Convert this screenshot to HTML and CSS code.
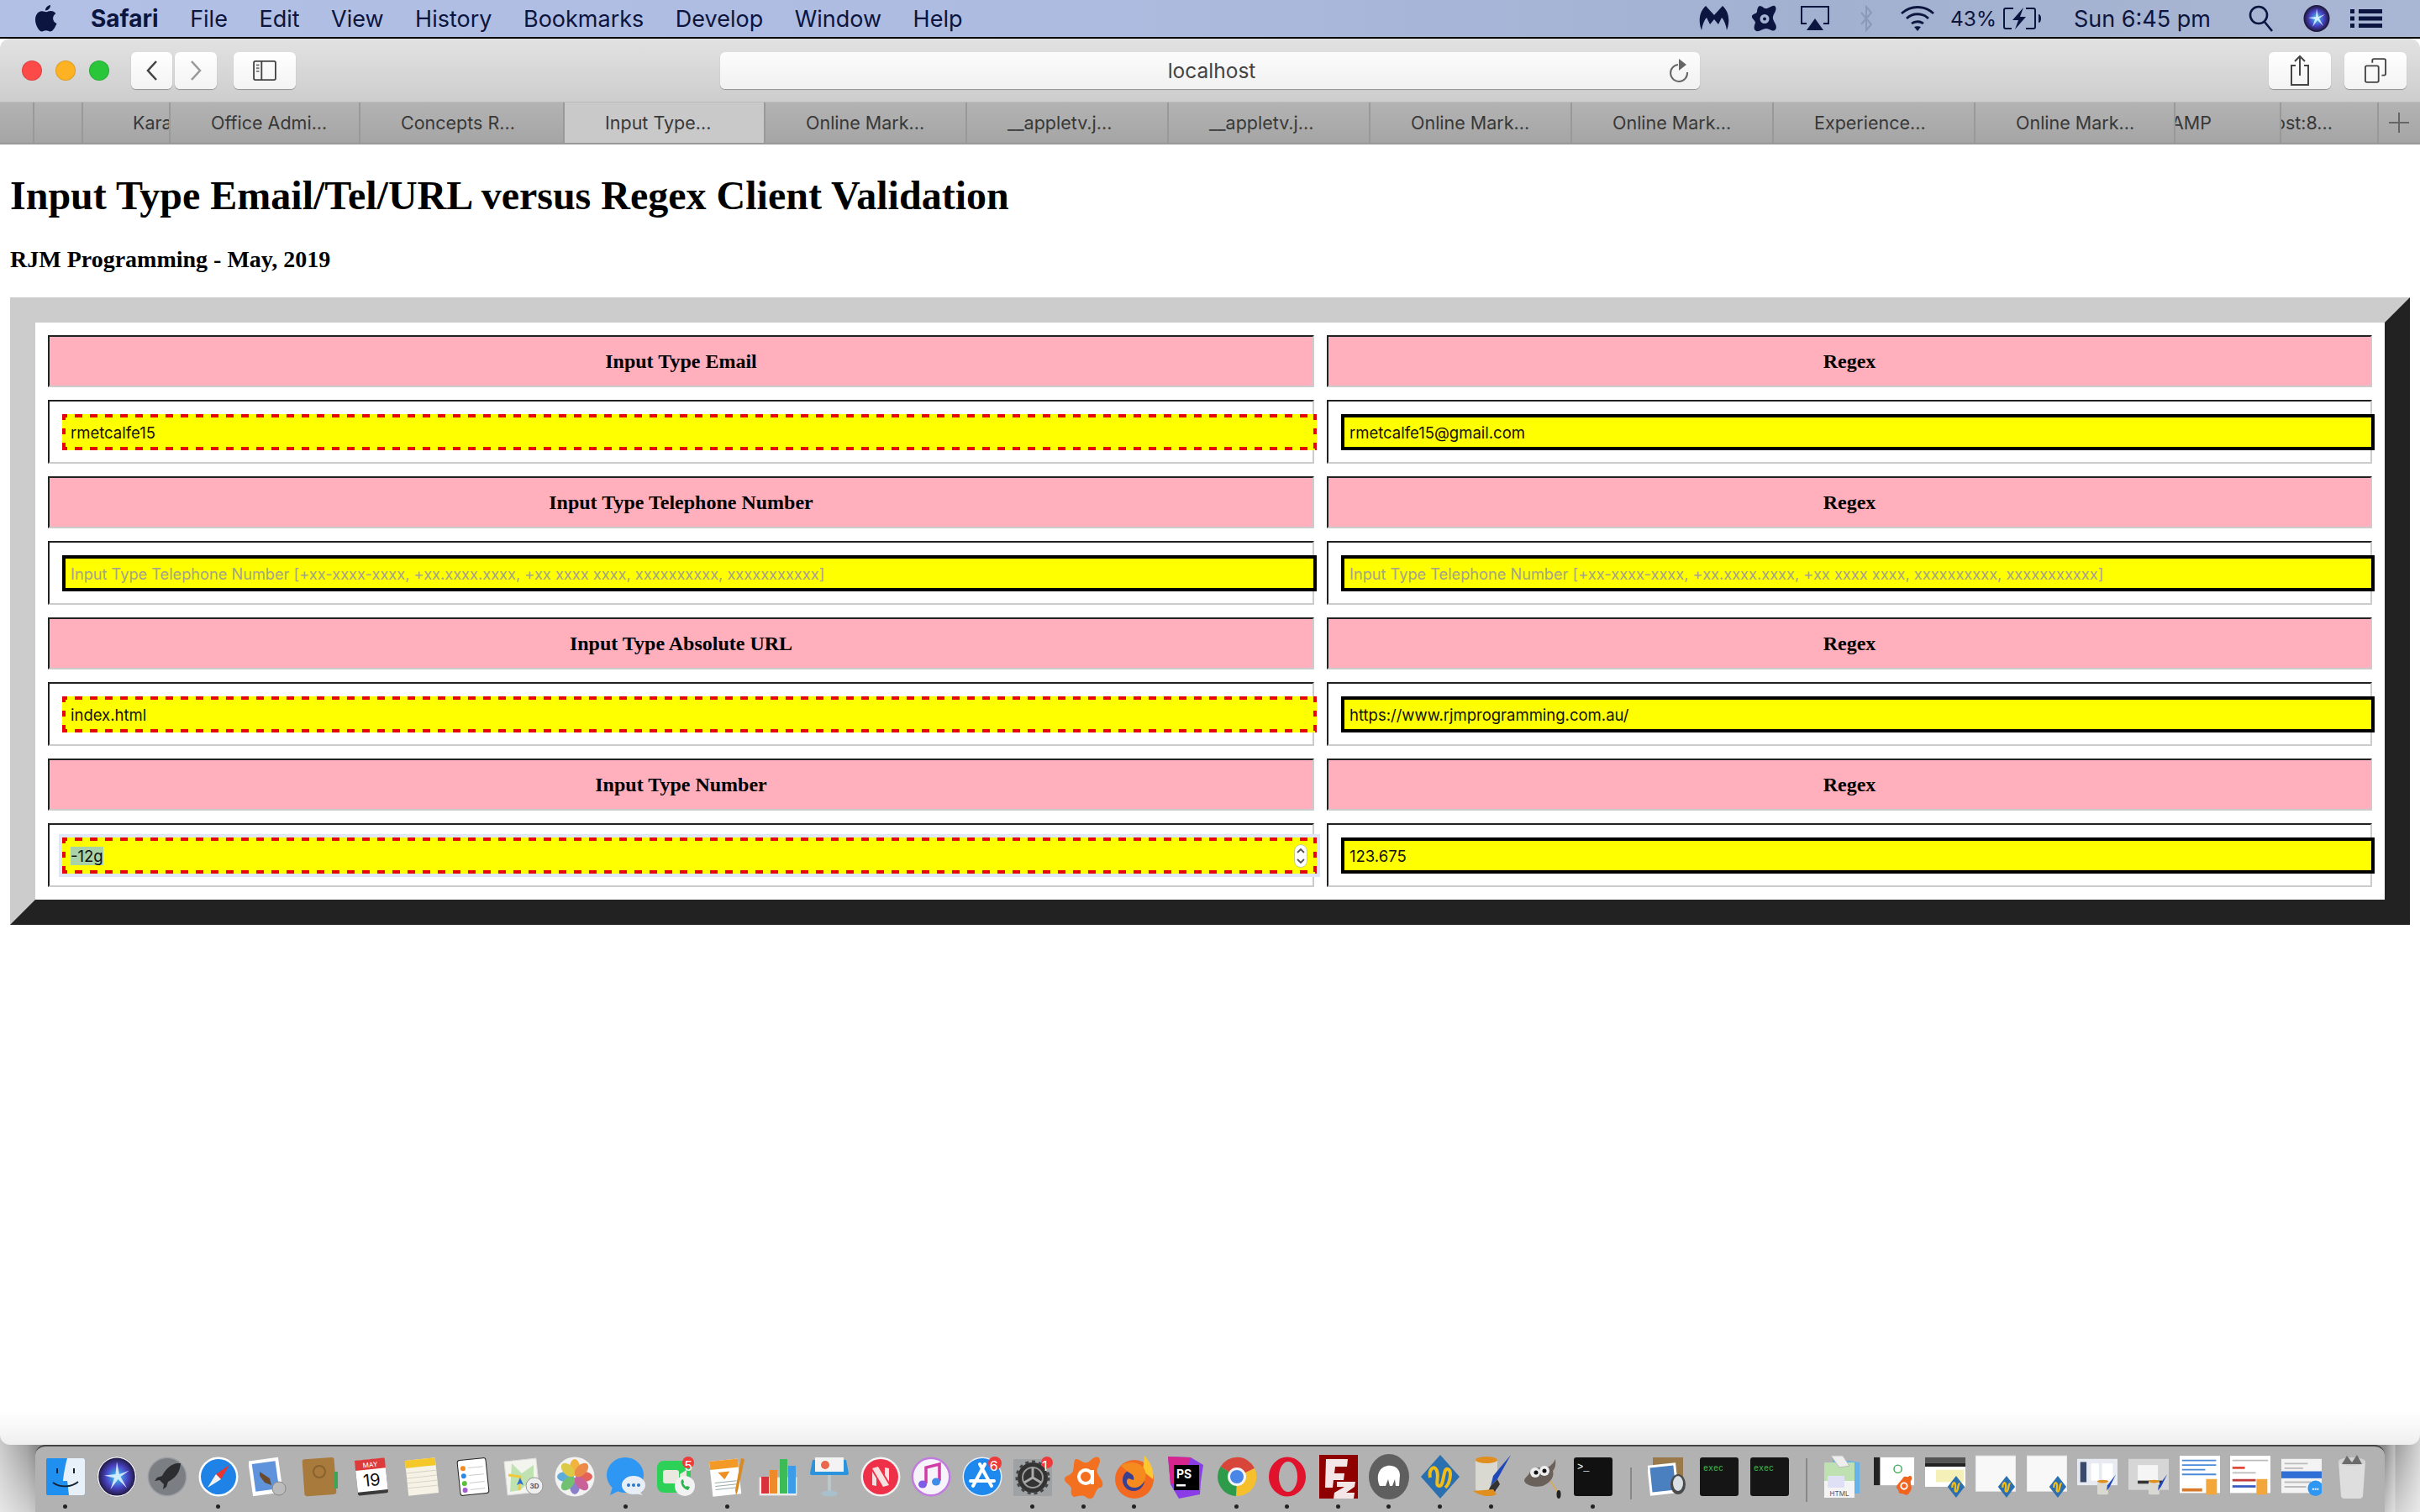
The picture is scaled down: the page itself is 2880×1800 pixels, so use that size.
FILE: index.html
```html
<!DOCTYPE html>
<html lang="en">
<head>
  <meta charset="UTF-8" />
  <title>Input Type Email/Tel/URL versus Regex Client Validation</title>
  <link rel="stylesheet" href="styles.css">
</head>
<body>
  <div class="menubar">
    <div class="menu-left">
      <svg class="apple" viewBox="0 0 26 32"><path d="M18 0c.3 3-2.400 6.500-6 6.500C11.700 3.300 14.800.4 18 0zM13 8.300c1.500 0 3-1.200 5.500-1.200 2.300 0 4.500 1.200 5.800 3.100-4.800 2.800-4 9.700 1.200 11.700-1.500 3.800-4.500 9.600-7.800 9.600-1.900 0-2.800-1.200-4.900-1.200-2.200 0-3.200 1.200-5 1.200C4.300 31.500 0 23.800 0 17.500 0 11.200 3.900 7.300 7.800 7.300c2.300 0 3.900 1 5.200 1z"/></svg>
      <b>Safari</b><span>File</span><span>Edit</span><span>View</span><span>History</span><span>Bookmarks</span><span>Develop</span><span>Window</span><span>Help</span>
    </div>
    <div class="menu-right">
      <svg class="st-malware" viewBox="0 0 36 32"><path d="M3 30C-1 20 0 8 8 1l10 11L28 1c8 7 9 19 5 29-1-6-3-12-6-15l-4 8-5-6-5 6-4-8c-3 3-5 9-6 15z"/></svg>
      <svg class="st-avast" viewBox="0 0 32 32"><path d="M10 1c4 0 5 4 9 3 4-1 6-4 9-3 3 2 1 7-1 10-2 4-1 6 1 10 2 3 3 7 0 9-3 2-6-2-10-2-4 0-8 4-12 3-4-2-2-7-1-10 0-3-5-5-4-8 1-3 5-2 6-5 0-3 1-6 3-7zM16 11a5 5 0 1 0 0 11 5 5 0 1 0 0-11z" fill-rule="evenodd"/><circle cx="16" cy="16.500" r="2"/></svg>
      <svg class="st-air" viewBox="0 0 36 32" fill="none" stroke="#0b1540" stroke-width="2"><path d="M8 22H2V2h32v20h-6"/><path d="M18 16l10 14H8z" fill="#0b1540" stroke="none"/></svg>
      <svg class="st-bt" viewBox="0 0 18 32" fill="none" stroke="#8c99b6" stroke-width="2"><path d="M3 9l12 14-6 7V2l6 7L3 23"/></svg>
      <svg class="st-wifi" viewBox="0 0 42 32" fill="none" stroke="#0b1540" stroke-width="2.800"><path d="M2 10c11-10 27-10 38 0M8 16c7-7 19-7 26 0M14 22c4-3 10-3 14 0"/><path d="M21 31l-4-5c2-1 6-1 8 0z" fill="#0b1540" stroke="none"/></svg>
      <span class="st-pct">43%</span>
      <svg class="st-batt" viewBox="0 0 46 26" fill="none" stroke="#0b1540" stroke-width="2"><path d="M12 1H3a2 2 0 0 0-2 2v20a2 2 0 0 0 2 2h7M27 1h9a2 2 0 0 1 2 2v20a2 2 0 0 1-2 2h-9"/><path d="M42 8c2 0 3 2 3 5s-1 5-3 5z" fill="#0b1540" stroke="none"/><path d="M24 0L11 15h7l-4 11 13-15h-7z" fill="#0b1540" stroke="none"/></svg>
      <span class="st-time">Sun 6:45 pm</span>
      <svg class="st-search" viewBox="0 0 30 32" fill="none" stroke="#0b1540" stroke-width="2.600"><circle cx="12" cy="12" r="10"/><path d="M19 20l9 11"/></svg>
      <svg class="st-siri" viewBox="0 0 32 32"><use href="#siri-ball"/></svg>
      <svg class="st-list" viewBox="0 0 38 22" fill="#0b1540"><rect width="5" height="5"/><rect x="10" width="28" height="5"/><rect y="8.500" width="5" height="5"/><rect x="10" y="8.500" width="28" height="5"/><rect y="17" width="5" height="5"/><rect x="10" y="17" width="28" height="5"/></svg>
    </div>
  </div>

  <div class="window">
    <div class="toolbar">
      <div class="lights"><i class="red"></i><i class="amber"></i><i class="green"></i></div>
      <div class="nav">
        <div class="btn back"><svg viewBox="0 0 16 26" width="16" height="26" fill="none" stroke="#444" stroke-width="2.600"><path d="M13 2L3 13l10 11"/></svg></div>
        <div class="btn fwd"><svg viewBox="0 0 16 26" width="16" height="26" fill="none" stroke="#999" stroke-width="2.600"><path d="M3 2l10 11L3 24"/></svg></div>
      </div>
      <div class="btn side"><svg viewBox="0 0 30 26" width="30" height="24" fill="none" stroke="#444" stroke-width="2"><rect x="1" y="1" width="28" height="24" rx="2"/><path d="M11 1v24"/><path d="M4 6h4M4 10h4M4 14h4" stroke="#777"/></svg></div>
      <div class="address">
        <span>localhost</span>
        <svg class="reload" viewBox="0 0 24 30" width="24" height="30" fill="none" stroke="#666" stroke-width="2"><path d="M11 8a10 10 0 1 0 11 9"/><path d="M12 1l9 7-9 7z" fill="#666" stroke="none"/></svg>
      </div>
      <div class="btn tool"><svg viewBox="0 0 24 38" width="24" height="38" fill="none" stroke="#444" stroke-width="2"><path d="M7 13H2v23h20V13h-5M12 25V2M6 8l6-6 6 6"/></svg></div>
      <div class="btn tool"><svg viewBox="0 0 28 32" width="26" height="30" fill="none" stroke="#444" stroke-width="2"><rect x="1" y="10" width="17" height="21" rx="2"/><path d="M10 6V3a2 2 0 0 1 2-2h13a2 2 0 0 1 2 2v17a2 2 0 0 1-2 2h-3"/></svg></div>
    </div>

    <div class="tabs">
      <div class="tab"></div>
      <div class="tab"></div>
      <div class="tab kara">Kara</div>
      <div class="tab">Office Admi...</div>
      <div class="tab">Concepts R...</div>
      <div class="tab active">Input Type...</div>
      <div class="tab">Online Mark...</div>
      <div class="tab">__appletv.j...</div>
      <div class="tab">__appletv.j...</div>
      <div class="tab">Online Mark...</div>
      <div class="tab">Online Mark...</div>
      <div class="tab">Experience...</div>
      <div class="tab">Online Mark...</div>
      <div class="tab cut-amp">AMP</div>
      <div class="tab cut-port">ost:8...</div>
      <div class="tab plus"><svg viewBox="0 0 24 24" width="24" height="24" stroke="#666" stroke-width="2"><path d="M12 0v24M0 12h24"/></svg></div>
    </div>

    <div class="page">
      <h1>Input Type Email/Tel/URL versus Regex Client Validation</h1>
      <h4>RJM Programming - May, 2019</h4>

      <table class="compare">
        <colgroup><col class="col-a"><col class="col-b"></colgroup>
        <tr><th>Input Type Email</th><th>Regex</th></tr>
        <tr>
          <td><div class="field bad">rmetcalfe15</div></td>
          <td><div class="field">rmetcalfe15@gmail.com</div></td>
        </tr>
        <tr><th>Input Type Telephone Number</th><th>Regex</th></tr>
        <tr>
          <td><div class="field hint">Input Type Telephone Number [+xx-xxxx-xxxx, +xx.xxxx.xxxx, +xx xxxx xxxx, xxxxxxxxxx, xxxxxxxxxxx]</div></td>
          <td><div class="field hint">Input Type Telephone Number [+xx-xxxx-xxxx, +xx.xxxx.xxxx, +xx xxxx xxxx, xxxxxxxxxx, xxxxxxxxxxx]</div></td>
        </tr>
        <tr><th>Input Type Absolute URL</th><th>Regex</th></tr>
        <tr>
          <td><div class="field bad">index.html</div></td>
          <td><div class="field">https://www.rjmprogramming.com.au/</div></td>
        </tr>
        <tr><th>Input Type Number</th><th>Regex</th></tr>
        <tr>
          <td>
            <div class="field bad focused">
              <span class="selected">-12g</span>
              <svg class="spinner" viewBox="0 0 16 28"><rect x=".5" y=".5" width="15" height="27" rx="7.500" fill="#fff" stroke="#c9c98a"/><path d="M4 10l4-4 4 4M4 18l4 4 4-4" fill="none" stroke="#555" stroke-width="1.800"/></svg>
            </div>
          </td>
          <td><div class="field">123.675</div></td>
        </tr>
      </table>
    </div>
  </div>

  <div class="dock-area">
    <div class="dock">
      <div class="app on"><svg viewBox="0 0 48 48"><rect x="1" y="2" width="46" height="44" rx="2" fill="#1f8ff0"/><path d="M26 2h19a2 2 0 0 1 2 2v40a2 2 0 0 1-2 2H28c-1-7-1-12-2-17h-5c1-10 3-20 5-27z" fill="#e8f0f9"/><path d="M14 14v6M34 14v6" stroke="#123" stroke-width="2"/><path d="M9 31c8 6 22 6 30-1" fill="none" stroke="#123" stroke-width="1.800"/></svg></div>
      <div class="app"><svg viewBox="0 0 32 32"><use href="#siri-ball"/><ellipse cx="16" cy="16" rx="15" ry="15.500" fill="none" stroke="#eee"/></svg></div>
      <div class="app"><svg viewBox="0 0 48 48"><circle cx="24" cy="24" r="23.500" fill="#9b9fa4"/><circle cx="24" cy="24" r="22" fill="#7b7f84"/><path d="M36 8c-8 1-14 7-18 15l-6 2-3 4 6-1 5 5-1 6 4-3 2-6c8-4 14-10 15-22z" fill="#2b2d30"/></svg></div>
      <div class="app on"><svg viewBox="0 0 48 48"><circle cx="24" cy="24" r="23.500" fill="#fff"/><circle cx="24" cy="24" r="21" fill="#1e82e6"/><path d="M37 10L21 21l6 6z" fill="#e8342c"/><path d="M11 37l16-10-6-6z" fill="#f2f2f2"/></svg></div>
      <div class="app"><svg viewBox="0 0 48 48"><rect x="2" y="3" width="36" height="42" fill="#fff" transform="rotate(-8 20 24)"/><rect x="6" y="7" width="28" height="33" fill="#5f94dd" transform="rotate(-8 20 24)"/><path d="M13 18l12 8 2 8-8-3-6-8z" fill="#6b4a2c"/><circle cx="36" cy="38" r="8" fill="#bbb" stroke="#888"/></svg></div>
      <div class="app"><svg viewBox="0 0 48 48"><rect x="4" y="2" width="38" height="44" rx="3" fill="#a87a3c" transform="rotate(-4 24 24)"/><rect x="41" y="18" width="4" height="20" fill="#3aa655"/><circle cx="23" cy="18" r="7" fill="none" stroke="#8a6230" stroke-width="2"/></svg></div>
      <div class="app"><svg viewBox="0 0 48 48"><g transform="rotate(-6 24 24)"><rect x="6" y="3" width="36" height="42" rx="2" fill="#3a3a3a"/><rect x="6" y="3" width="36" height="38" fill="#fff"/><rect x="6" y="3" width="36" height="12" fill="#dd3b3b"/><text x="24" y="12.500" class="cal-month">MAY</text><text x="24" y="35" class="cal-day">19</text></g></svg></div>
      <div class="app"><svg viewBox="0 0 48 48"><g transform="rotate(-6 24 24)"><rect x="6" y="3" width="36" height="42" fill="#f6f3e6"/><rect x="6" y="3" width="36" height="9" fill="#f4c829"/><path d="M6 18h36M6 24h36M6 30h36M6 36h36" stroke="#d8d4c4"/></g></svg></div>
      <div class="app"><svg viewBox="0 0 48 48"><g transform="rotate(-6 24 24)"><rect x="7" y="3" width="34" height="42" rx="3" fill="#fff" stroke="#222"/><circle cx="13" cy="13" r="3" fill="#f08a24"/><circle cx="13" cy="22" r="3" fill="#2a8ae8"/><circle cx="13" cy="31" r="3" fill="#5ac03c"/><circle cx="13" cy="39" r="3" fill="#a65ad8"/><path d="M19 13h18M19 22h18M19 31h18M19 39h18" stroke="#ccc"/></g></svg></div>
      <div class="app"><svg viewBox="0 0 48 48"><rect x="3" y="4" width="38" height="40" fill="#f4f4ee" stroke="#ddd" transform="rotate(-6 22 24)"/><path d="M10 8l12 12 14-10v16L20 40 8 42z" fill="#bfe3b0"/><path d="M6 22l14 2-1 16" fill="none" stroke="#f0c93c" stroke-width="3"/><path d="M16 34l4-9 4 9-4-2z" fill="#2a6fd8"/><circle cx="37" cy="35" r="10" fill="#eee" stroke="#999"/><text x="37" y="38" class="maps-3d">3D</text></svg></div>
      <div class="app"><svg viewBox="0 0 48 48"><circle cx="24" cy="24" r="23.500" fill="#f2f2f2"/><g opacity=".85"><ellipse cx="24" cy="13" rx="6" ry="10" fill="#f3a81f"/><ellipse cx="24" cy="35" rx="6" ry="10" fill="#7a6bc4"/><ellipse cx="13" cy="24" rx="10" ry="6" fill="#45a0d8"/><ellipse cx="35" cy="24" rx="10" ry="6" fill="#e24a3c"/><ellipse cx="16" cy="16" rx="6" ry="10" fill="#d8c32a" transform="rotate(-45 16 16)"/><ellipse cx="32" cy="32" rx="6" ry="10" fill="#c44a8a" transform="rotate(-45 32 32)"/><ellipse cx="32" cy="16" rx="6" ry="10" fill="#ec7a2c" transform="rotate(45 32 16)"/><ellipse cx="16" cy="32" rx="6" ry="10" fill="#5cb85c" transform="rotate(45 16 32)"/></g></svg></div>
      <div class="app on"><svg viewBox="0 0 48 48"><ellipse cx="23" cy="22" rx="22" ry="21" fill="#2e97f3"/><path d="M8 36l-3 10 10-5z" fill="#2e97f3"/><ellipse cx="33" cy="34" rx="14" ry="11" fill="#e8eef5"/><path d="M40 42l4 4-9-2z" fill="#e8eef5"/><circle cx="27" cy="34" r="2" fill="#2878c8"/><circle cx="33" cy="34" r="2" fill="#2878c8"/><circle cx="39" cy="34" r="2" fill="#2878c8"/></svg></div>
      <div class="app"><svg viewBox="0 0 48 48"><rect x="1" y="5" width="40" height="38" rx="8" fill="#2ed158"/><rect x="8" y="16" width="19" height="16" rx="3" fill="#e9e9e0"/><path d="M28 21l8-5v16l-8-5z" fill="#e9e9e0"/><circle cx="34" cy="35" r="12" fill="#f2f2f2"/><path d="M30 28c-2 4 2 11 8 12l2-4-4-1-1 1-3-4 1-1-1-4z" fill="#2bb24c"/><circle cx="38" cy="7" r="7" fill="#ee3a3a"/></svg><em class="badge">5</em></div>
      <div class="app on"><svg viewBox="0 0 48 48"><g transform="rotate(-6 22 24)"><rect x="4" y="4" width="34" height="42" fill="#fff"/><rect x="4" y="4" width="34" height="10" fill="#f39a26"/><path d="M13 18h14l-7 9z" fill="#ef8f23"/><path d="M8 30h26M8 34h26M8 38h26" stroke="#9aa"/></g><path d="M44 3l-8 38-2 5-1-6 7-38z" fill="#d98a22"/></svg></div>
      <div class="app"><svg viewBox="0 0 48 48"><rect x="2" y="25" width="44" height="21" fill="#f3f3f3" stroke="#ddd"/><rect x="4" y="24" width="9" height="20" fill="#d8333a"/><rect x="14" y="16" width="9" height="28" fill="#ef8a2a"/><rect x="26" y="3" width="9" height="41" fill="#3dbb57"/><rect x="36" y="11" width="9" height="33" fill="#3d9ce8"/></svg></div>
      <div class="app"><svg viewBox="0 0 48 48"><path d="M4 4h40l3 16a2 2 0 0 1-2 2H3a2 2 0 0 1-2-2z" fill="#2c94dc"/><rect x="7" y="1" width="34" height="17" fill="#f3f3f3"/><circle cx="19" cy="10" r="5" fill="#e9674a"/><rect x="22" y="22" width="4" height="20" fill="#bcc7cc"/><ellipse cx="24" cy="44" rx="10" ry="3.500" fill="#a8c0cc"/></svg></div>
      <div class="app"><svg viewBox="0 0 48 48"><circle cx="24" cy="24" r="23.500" fill="#f2f2f2"/><circle cx="24" cy="24" r="21" fill="#ee3049"/><path d="M14 14l7-2 13 22-7 2zM14 18v16l5 1V26zM29 13l5 1v16l-5-8z" fill="#f7e0e0"/></svg></div>
      <div class="app"><svg viewBox="0 0 48 48"><circle cx="24" cy="24" r="23.500" fill="#c27be0"/><circle cx="24" cy="24" r="21" fill="#f6f3fb"/><path d="M18 32V13l16-4v20" fill="none" stroke="#d13ba5" stroke-width="3.500"/><ellipse cx="14" cy="33" rx="5" ry="4.500" fill="#7d5be6"/><ellipse cx="30" cy="30" rx="5" ry="4.500" fill="#3f8de8"/></svg></div>
      <div class="app"><svg viewBox="0 0 48 48"><circle cx="24" cy="24" r="23.500" fill="#e4eefb"/><circle cx="24" cy="24" r="22" fill="#1d88ee"/><path d="M27 9L13 35M21 9l14 26M10 29h28" stroke="#fff" stroke-width="4" fill="none" stroke-linecap="round"/><circle cx="39" cy="8" r="8" fill="#ee3a3a"/></svg><em class="badge">6</em></div>
      <div class="app on"><svg viewBox="0 0 48 48"><rect x="1" y="3" width="46" height="44" rx="1" fill="#9ea2a5"/><circle cx="24" cy="25" r="18" fill="#333"/><circle cx="24" cy="25" r="19" fill="none" stroke="#444" stroke-width="3" stroke-dasharray="4 4"/><circle cx="24" cy="25" r="12" fill="none" stroke="#999" stroke-width="2"/><path d="M24 25V13M24 25l10 6M24 25l-10 6" stroke="#aaa" stroke-width="3"/><circle cx="41" cy="7" r="7" fill="#ee3a3a"/></svg><em class="badge">1</em></div>
      <div class="app on"><svg viewBox="0 0 48 54"><path d="M14 6c5-1 9 6 14 4s8-8 13-6c4 2 1 9-1 13-2 5 2 9 5 14 2 4 2 9-2 9-4 1-5 6-7 10-2 4-7 4-10 1-4-3-9-1-13 0-4 0-5-5-4-9 1-4-7-7-8-11-1-5 6-5 9-9s1-14 4-16z" fill="#f37021"/><circle cx="26" cy="27" r="8" fill="none" stroke="#fff" stroke-width="4"/><path d="M34 19v17" stroke="#fff" stroke-width="4"/></svg></div>
      <div class="app on"><svg viewBox="0 0 48 54"><circle cx="24" cy="30" r="23" fill="#f26a21"/><path d="M36 2c8 8 12 20 10 28L34 20z" fill="#fdc82f"/><circle cx="23" cy="31" r="13" fill="#3a3f8f"/><path d="M8 14c8-6 22-6 28 4 4 8 0 20-10 22-10 1-14-8-9-11l6 2c2-6-4-8-7-10z" fill="#f58a1f"/></svg></div>
      <div class="app"><svg viewBox="0 0 48 54"><path d="M3 3l27 1 15 9-3 20-1 15-25 5L6 36z" fill="#8a3ce6"/><path d="M3 3l27 1-10 30-14 2z" fill="#d6268e"/><rect x="10" y="13" width="30" height="30" fill="#000"/><text x="13" y="29" class="ps-mark">PS</text><rect x="13" y="36" width="11" height="2.500" fill="#fff"/></svg></div>
      <div class="app on"><svg viewBox="0 0 48 48"><path d="M24 24L4.500 12A23 23 0 0 1 45 14z" fill="#d8463a"/><path d="M24 24L45 14a23 23 0 0 1-22 33z" fill="#f6c02c"/><path d="M24 24L23 47A23 23 0 0 1 4.500 12z" fill="#2e9b4a"/><circle cx="24" cy="24" r="11" fill="#f4f4f4"/><circle cx="24" cy="24" r="8" fill="#4a86e8"/></svg></div>
      <div class="app on"><svg viewBox="0 0 48 48"><ellipse cx="24" cy="24" rx="22" ry="23.500" fill="#e0122c"/><ellipse cx="25" cy="24" rx="11" ry="18" fill="#b2b2b2"/></svg></div>
      <div class="app on"><svg viewBox="0 0 48 54"><rect x="1" y="1" width="46" height="52" fill="#8f0000"/><path d="M9 6h26l-1 9H20l-1 8h12l-1 8H18l-1 9H8z" fill="#f4e6e6"/><path d="M22 33h22l-1 6-10 7h10l-1 7H18l1-7 12-7H22z" fill="#f4e6e6"/></svg></div>
      <div class="app on"><svg viewBox="0 0 48 54"><ellipse cx="24" cy="27" rx="24" ry="27" fill="#5f5f5f"/><path d="M13 38c-3-6-3-14 0-18 3-5 9-7 14-6 6 1 10 5 10 11l-1 13h-4l-1-8-3 8h-3l-2-8-3 8h-4z" fill="#fff"/></svg></div>
      <div class="app on"><svg viewBox="0 0 48 54"><path d="M24 1l23 26-23 26L1 27z" fill="#2a6fb0"/><path d="M12 28c-2-10 5-16 8-8s-3 18 3 18 4-22 10-20 2 18-3 22" fill="none" stroke="#f3bd18" stroke-width="4"/></svg></div>
      <div class="app on"><svg viewBox="0 0 48 54"><rect x="5" y="6" width="26" height="38" rx="3" fill="#d9d9d2"/><ellipse cx="18" cy="7" rx="13" ry="4" fill="#e08f1e"/><path d="M47 1L31 30l-8 8 3-12z" fill="#1f48b8"/><path d="M23 38l8-8 3 6-8 12-7-2z" fill="#333"/><path d="M2 44c8 6 20 8 28 4l-4-6z" fill="#e08f1e"/></svg></div>
      <div class="app"><svg viewBox="0 0 48 54"><path d="M40 6c1 8-1 12-3 14 2 6-2 14-12 18-8 2-20 0-22-6 0-4 4-5 6-9 2-6 10-8 16-6 6 0 12-4 15-11z" fill="#6a625a"/><circle cx="16" cy="22" r="6" fill="#eee"/><circle cx="27" cy="20" r="6" fill="#eee"/><circle cx="17" cy="22" r="2.500" fill="#111"/><circle cx="27" cy="20" r="2.500" fill="#111"/><path d="M34 32l8 12" stroke="#d8a860" stroke-width="2"/><ellipse cx="44" cy="48" rx="2.500" ry="5" fill="#222"/></svg></div>
      <div class="app on"><svg viewBox="0 0 48 48"><rect x="1" y="1" width="46" height="46" rx="3" fill="#111"/><text x="5" y="16" class="term-mark">&gt;_</text></svg></div>
      <div class="dock-sep short"></div>
      <div class="app"><svg viewBox="0 0 48 48"><rect x="6" y="1" width="36" height="30" fill="#9a7a4a"/><rect x="1" y="9" width="34" height="36" fill="#fff" transform="rotate(-6 18 27)"/><rect x="4" y="12" width="28" height="29" fill="#4a7fc0" transform="rotate(-6 18 27)"/><ellipse cx="36" cy="33" rx="9" ry="12" fill="#4a4a4a"/><ellipse cx="36" cy="32" rx="6" ry="9" fill="#d8e0e6"/></svg></div>
      <div class="app"><svg viewBox="0 0 48 48"><use href="#exec-win"/></svg></div>
      <div class="app"><svg viewBox="0 0 48 48"><use href="#exec-win"/></svg></div>
      <div class="dock-sep"></div>
      <div class="app"><svg viewBox="0 0 48 54"><path d="M12 5l2 42h30V10z" fill="#66b2ea"/><rect x="2" y="10" width="36" height="42" fill="#f4f4f4"/><rect x="2" y="10" width="36" height="22" fill="#bfe0b0"/><rect x="6" y="26" width="20" height="14" fill="#dfe0f6"/><text x="20" y="50" class="doc-mark">HTML</text><path d="M10 2h14l8 12-12 2z" fill="#eee" stroke="#bbb"/></svg></div>
      <div class="app"><svg viewBox="0 0 52 54"><rect width="52" height="36" y="2" fill="#fff"/><rect width="8" height="36" y="2" fill="#222"/><circle cx="31" cy="17" r="5" fill="none" stroke="#3aa655" stroke-width="1.500"/><use href="#mini-avast"/></svg></div>
      <div class="app"><svg viewBox="0 0 52 54"><rect y="2" width="52" height="38" fill="#fff"/><rect y="2" width="52" height="7" fill="#555"/><rect x="0" y="9" width="52" height="5" fill="#222"/><rect x="14" y="18" width="36" height="16" fill="#f5efb8"/><use href="#mini-coda"/></svg></div>
      <div class="app"><svg viewBox="0 0 52 54"><rect y="0" width="52" height="46" fill="#f8f8f8" stroke="#ddd"/><use href="#mini-coda"/></svg></div>
      <div class="app"><svg viewBox="0 0 52 54"><rect y="0" width="52" height="46" fill="#f8f8f8" stroke="#ddd"/><use href="#mini-coda"/></svg></div>
      <div class="app"><svg viewBox="0 0 52 54"><rect y="4" width="52" height="34" fill="#e8ecf2"/><rect x="4" y="8" width="8" height="26" fill="#3a4a6a"/><rect x="18" y="10" width="10" height="22" fill="#fff"/><rect x="32" y="10" width="14" height="22" fill="#fff"/><use href="#mini-paint"/></svg></div>
      <div class="app"><svg viewBox="0 0 52 54"><rect y="4" width="52" height="40" fill="#d6d6d6"/><rect x="12" y="12" width="26" height="22" fill="#f5f5f5"/><rect x="12" y="32" width="32" height="4" fill="#333"/><use href="#mini-paint"/></svg></div>
      <div class="app"><svg viewBox="0 0 52 54"><rect y="0" width="52" height="48" fill="#fff"/><path d="M3 6h44M3 12h44M3 18h30M3 24h44" stroke="#4a8ad8" stroke-width="2"/><rect x="3" y="42" width="26" height="4" fill="#d87a2a"/><rect x="34" y="30" width="14" height="20" fill="#f3a63a"/></svg></div>
      <div class="app"><svg viewBox="0 0 52 54"><rect y="0" width="52" height="48" fill="#fff"/><rect x="3" y="14" width="16" height="3" fill="#e04a3a"/><rect x="3" y="30" width="30" height="3" fill="#c03a3a"/><rect x="3" y="38" width="30" height="3" fill="#3a5ac0"/><path d="M3 6h46M3 22h30" stroke="#bbb" stroke-width="2"/><rect x="34" y="30" width="14" height="20" fill="#f3a63a"/></svg></div>
      <div class="app"><svg viewBox="0 0 52 54"><rect y="4" width="52" height="44" fill="#f3f3f3"/><rect y="20" width="52" height="9" fill="#2f6fd6"/><path d="M4 10h30M4 16h24M4 34h34M4 40h28" stroke="#bbb" stroke-width="2"/><circle cx="44" cy="42" r="10" fill="#2e97f3"/><path d="M40 43h8" stroke="#fff" stroke-width="2" stroke-dasharray="2 1"/></svg></div>
      <div class="app"><svg viewBox="0 0 48 54"><path d="M8 8h32l-3 42a4 4 0 0 1-4 3H15a4 4 0 0 1-4-3z" fill="#dedede"/><ellipse cx="24" cy="9" rx="16" ry="5" fill="#d2d2d2"/><path d="M12 12l6-10 6 8 6-9 6 11z" fill="#6b6b6b"/></svg></div>
    </div>
  </div>

  <svg class="defs" width="0" height="0">
    <defs>
      <radialGradient id="siri-grad"><stop offset="0" stop-color="#38d8f2"/><stop offset=".55" stop-color="#4a44c8"/><stop offset="1" stop-color="#1a1430"/></radialGradient>
      <g id="siri-ball"><ellipse cx="16" cy="16" rx="15.500" ry="16" fill="url(#siri-grad)"/><path d="M16 4l2 10 8-3-7 5 5 9-7-7-6 8 3-9-8-2 9-1z" fill="#e8f4ff" opacity=".85"/></g>
      <g id="exec-win"><rect x="1" y="1" width="46" height="46" rx="3" fill="#151515"/><text x="5" y="17" class="exec-mark">exec</text></g>
      <g id="mini-avast"><path d="M38 28c3-3 5 1 8-2 3-1 4 3 2 6s2 8 0 12-5 8-8 6-8 0-8-4 -5-4-2-8 6-7 8-10z" fill="#f0641e"/><circle cx="39" cy="39" r="4" fill="none" stroke="#fff" stroke-width="2"/></g>
      <g id="mini-coda"><path d="M40 26l11 14-11 14-11-14z" fill="#2a6fb0"/><path d="M35 41c0-6 3-8 4-4s-2 9 1 9 2-11 5-10" fill="none" stroke="#f3bd18" stroke-width="2.500"/></g>
      <g id="mini-paint"><rect x="26" y="32" width="14" height="18" rx="2" fill="#d9d9d2"/><ellipse cx="33" cy="33" rx="7" ry="2" fill="#e08f1e"/><path d="M50 24l-8 16-4 5 1-7z" fill="#1f48b8"/></g>
    </defs>
  </svg>
</body>
</html>
```

FILE: styles.css
```css
html, body {
  margin: 0;
  height: 100%;
}

body {
  width: 2880px;
  height: 1800px;
  overflow: hidden;
  display: flex;
  flex-direction: column;
  background: #fff;
  font-family: 'Inter', 'Liberation Sans', sans-serif;
}

.defs {
  position: absolute;
}

/* mac menu bar */
.menubar {
  height: 44px;
  flex: none;
  display: flex;
  justify-content: space-between;
  align-items: center;
  padding: 0 45px 0 42px;
  background: linear-gradient(90deg, #b1c0e4 0%, #acbbdf 45%, #a2b1d0 75%, #a9b6d4 100%);
  border-bottom: 2px solid #000;
  color: #0b1540;
  font-size: 27px;
}

.menu-left,
.menu-right {
  display: flex;
  align-items: center;
}

.menu-left {
  gap: 37.5px;
}

.menu-left b {
  font-weight: 700;
  font-size: 28px;
}

.apple {
  width: 26px;
  height: 32px;
  fill: #0b1540;
  margin-right: 2.5px;
}

.menu-right svg {
  flex: none;
}

.st-malware { width: 36px; height: 32px; fill: #0b1540; }
.st-avast { width: 32px; height: 32px; margin-left: 26px; fill: #0b1540; }
.st-air { width: 36px; height: 32px; margin-left: 26px; }
.st-bt { width: 18px; height: 32px; margin-left: 34px; }
.st-wifi { width: 42px; height: 32px; margin-left: 31px; }
.st-pct { margin-left: 18px; font-size: 24.5px; }
.st-batt { width: 46px; height: 26px; margin-left: 8px; }
.st-time { margin-left: 38px; }
.st-search { width: 30px; height: 32px; margin-left: 45px; }
.st-siri { width: 32px; height: 32px; margin-left: 35px; }
.st-list { width: 38px; height: 22px; margin-left: 24px; }

/* safari window */
.window {
  height: 1674px;
  flex: none;
  display: flex;
  flex-direction: column;
  border-radius: 12px;
  overflow: hidden;
  position: relative;
  z-index: 1;
}

.toolbar {
  height: 75px;
  flex: none;
  display: flex;
  align-items: center;
  padding: 1px 16px 0 26px;
  box-sizing: border-box;
  background: linear-gradient(#e2e2e2, #cdcdcd);
}

.lights {
  display: flex;
  gap: 16px;
  margin-right: 26px;
}

.lights i {
  width: 24px;
  height: 24px;
  border-radius: 50%;
  box-sizing: border-box;
  border: 1px solid rgba(0, 0, 0, 0.12);
}

.lights .red { background: #fc4a48; }
.lights .amber { background: #fdb224; }
.lights .green { background: #2ac63a; }

.btn {
  height: 44px;
  display: flex;
  align-items: center;
  justify-content: center;
  background: linear-gradient(#fff, #f3f3f3);
  border-radius: 6px;
  box-shadow: 0 1px 1px rgba(0, 0, 0, 0.3);
  flex: none;
}

.nav {
  display: flex;
  gap: 3px;
  margin-right: 20px;
}

.back { width: 49px; }
.fwd { width: 50px; }
.side { width: 74px; }
.tool { width: 74px; margin-left: 16px; }

.address {
  width: 1166px;
  height: 44px;
  flex: none;
  margin: 0 661px 0 505px;
  padding-left: 4px;
  box-sizing: border-box;
  position: relative;
  display: flex;
  align-items: center;
  justify-content: center;
  background: linear-gradient(#fcfcfc, #f1f1f1);
  border-radius: 6px;
  box-shadow: 0 1px 1px rgba(0, 0, 0, 0.3);
  font-size: 24.5px;
  color: #444;
}

.reload {
  position: absolute;
  right: 13px;
  top: 7px;
}

.tabs {
  height: 51px;
  flex: none;
  display: grid;
  grid-template-columns: 39px 58px 104px 226px 243px 239px 240px 240px 240px 240px 240px 240px 238px 126px 116px 49px;
  padding-left: 2px;
  background: linear-gradient(#b3b3b3, #a5a5a5);
  border-top: 1px solid #bbb;
  border-bottom: 2px solid #999;
  box-sizing: border-box;
  color: #383838;
  font-size: 21.5px;
}

.tab {
  display: flex;
  align-items: center;
  padding-left: 48px;
  overflow: hidden;
  white-space: nowrap;
  border-right: 2px solid #999;
  box-sizing: border-box;
}

.tab:nth-child(-n+2) {
  padding-left: 0;
}

.tabs .kara {
  padding-left: 59px;
}

.tabs .cut-amp {
  padding-left: 0;
  text-indent: -5px;
}

.tabs .cut-port {
  padding-left: 0;
  text-indent: -8px;
}

.tabs .active {
  background: #c9c9c9;
}

.tabs .plus {
  padding-left: 12px;
  border-right: 0;
}

/* page content */
.page {
  flex: 1;
  min-height: 0;
  padding: 0 12px;
  background: linear-gradient(#fff calc(100% - 40px), #efefef 100%);
  font-family: 'Liberation Serif', serif;
  color: #000;
}

h1 {
  font-size: 48px;
  line-height: 56px;
  margin: 33px 0 0;
}

h4 {
  font-size: 28px;
  line-height: 32px;
  margin: 32px 0 0;
}

.compare {
  width: 2856px;
  margin-top: 29px;
  border-collapse: separate;
  border-spacing: 15px;
  table-layout: fixed;
  border-width: 30px;
  border-style: solid;
  border-color: #ccc #222 #222 #ccc;
  background: #fff;
}

.col-a { width: 1507px; }

.compare th,
.compare td {
  border: 2px solid;
  border-color: #222 #ccc #ccc #222;
}

.compare th {
  height: 58px;
  padding: 0;
  background: #ffb0bc;
  font-size: 24px;
}

.compare td {
  padding: 15px 15px 14px;
}

.field {
  position: relative;
  width: 100%;
  height: 35px;
  padding: 0 6px;
  box-sizing: content-box;
  border: 4px solid #000;
  background: #ff0;
  font-family: 'Inter', 'Liberation Sans', sans-serif;
  font-size: 18.5px;
  line-height: 36px;
  color: #111;
  white-space: nowrap;
}

.bad {
  border-color: transparent;
  background-color: #ff0;
  background-origin: border-box;
  background-repeat: no-repeat;
  background-image:
    repeating-linear-gradient(90deg, #e8000f -3px 6px, transparent 6px 15px),
    repeating-linear-gradient(90deg, #e8000f -3px 6px, transparent 6px 15px),
    repeating-linear-gradient(180deg, #e8000f 0 7px, transparent 7px 17px),
    repeating-linear-gradient(180deg, #e8000f 0 7px, transparent 7px 17px);
  background-size: 100% 4px, 100% 4px, 4px 100%, 4px 100%;
  background-position: top, bottom, left, right;
}

.focused {
  box-shadow: 0 0 0 4px #dfe7f6;
}

.hint {
  color: #a3a38c;
  font-size: 18.2px;
}

.selected {
  display: inline-block;
  background: #a9d2a6;
  line-height: 22px;
}

.spinner {
  position: absolute;
  right: 7px;
  top: 4px;
  width: 16px;
  height: 28px;
}

/* dock */
.dock-area {
  flex: 1;
  margin-top: -14px;
  padding: 14px 42px 0;
  background:
    linear-gradient(rgba(255, 255, 255, 0), rgba(255, 255, 255, 0.55)),
    linear-gradient(90deg, #c8c8c8 0, #9a9a9a 32px, #808080 42px, #808080 2838px, #b6b6b6 2850px, #969696 2851px, #d0d0d0 100%);
}

.dock {
  height: 100%;
  display: flex;
  align-items: flex-start;
  gap: 12.6px;
  padding: 9px 0 0 12px;
  box-sizing: border-box;
  background: #b2b2b2;
  border-top: 2px solid #444;
  border-radius: 12px 12px 0 0;
}

.app {
  width: 48px;
  height: 54px;
  position: relative;
  flex: none;
}

.app svg {
  width: 48px;
  height: 54px;
  display: block;
}

.app.on::after {
  content: "";
  position: absolute;
  left: 21px;
  top: 60px;
  width: 5px;
  height: 5px;
  border-radius: 50%;
  background: #222;
}

.badge {
  position: absolute;
  right: 0;
  top: 4px;
  width: 20px;
  font: 16px 'Inter', sans-serif;
  color: #fff;
  text-align: center;
}

.dock-sep {
  width: 2px;
  height: 52px;
  flex: none;
  margin: 5px 6px 0;
  background: #888;
}

.dock-sep.short {
  height: 38px;
  margin: 16px 6px 0 8px;
}

.cal-month { font: 8px 'Inter', sans-serif; fill: #fff; text-anchor: middle; }
.cal-day { font: 20px 'Inter', sans-serif; fill: #111; text-anchor: middle; }
.maps-3d { font: bold 8px 'Inter', sans-serif; fill: #555; text-anchor: middle; }
.ps-mark { font: bold 14px 'Inter', sans-serif; fill: #fff; }
.term-mark { font: 12px 'Liberation Mono', monospace; fill: #fff; }
.exec-mark { font: 10px 'Liberation Mono', monospace; fill: #3dbb4a; }
.doc-mark { font: 8px 'Inter', sans-serif; fill: #555; text-anchor: middle; }
```
